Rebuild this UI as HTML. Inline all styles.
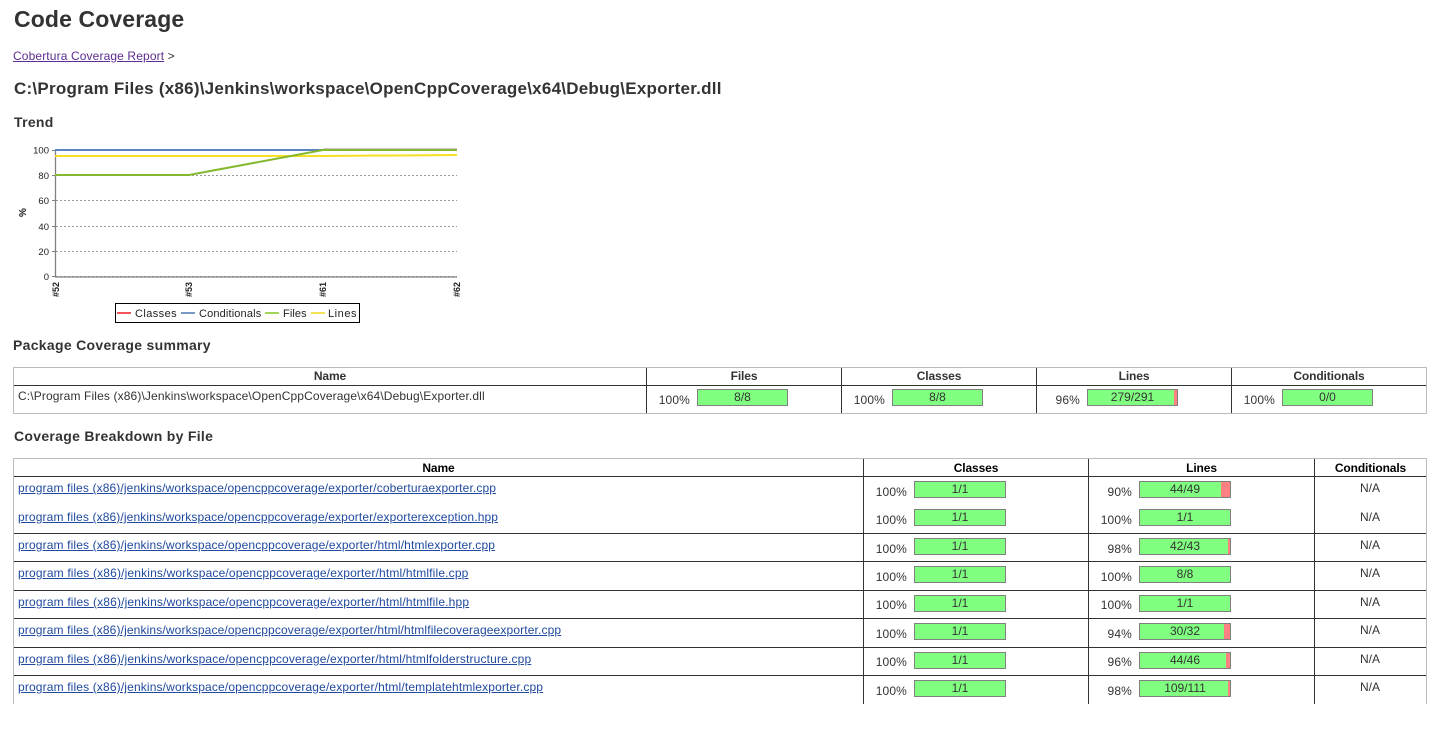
<!DOCTYPE html>
<html><head><meta charset="utf-8"><title>Code Coverage</title>
<style>
html,body{margin:0;padding:0;background:#fff;width:1436px;height:730px;overflow:hidden}
body{position:relative;font-family:"Liberation Sans",Arial,sans-serif;color:#333;font-size:12px}
.t{position:absolute;white-space:nowrap;line-height:14px;letter-spacing:.125px}
.hd{position:absolute;white-space:nowrap;font-size:14px;line-height:16px;font-weight:bold;letter-spacing:.3px}
.h{position:absolute;background:#333;height:1px}
.v{position:absolute;background:#333;width:1px}
.g{position:absolute;background:#bbb}
a{color:#204a9f;text-decoration:underline}
.th{position:absolute;white-space:nowrap;line-height:14px;font-weight:bold;text-align:center;letter-spacing:-.12px}
.b{position:absolute;width:90px;height:15px;border:1px solid #808080;background:#80ff80;text-align:center;line-height:14px;color:#333}
.s{width:89px}
.b i{position:absolute;right:0;top:0;height:15px;background:#ff8080}
.b span{position:relative}
.p{position:absolute;white-space:nowrap;text-align:right;line-height:14px;width:40px;letter-spacing:.15px}
.n{position:absolute;left:1314px;width:112px;text-align:center;line-height:14px}
</style></head><body>
<div class="t" style="left:14px;top:7px;font-size:23px;line-height:25px;font-weight:bold;letter-spacing:.12px">Code Coverage</div>
<div class="t" style="left:13px;top:49px"><a href="#" style="color:#5c2d91">Cobertura Coverage Report</a> &gt;</div>
<div class="t" style="left:14px;top:80px;font-size:17px;line-height:18px;font-weight:bold;letter-spacing:.24px">C:\Program Files (x86)\Jenkins\workspace\OpenCppCoverage\x64\Debug\Exporter.dll</div>
<div class="hd" style="left:14px;top:114px">Trend</div>

<svg style="position:absolute;left:0;top:130px" width="480" height="200" viewBox="0 130 480 200">
<g stroke="#999" stroke-width="1" stroke-dasharray="2 2" fill="none">
<path d="M56 175.500H457M56 200.500H457M56 226.500H457M56 251.500H457M56 276.500H457"/>
</g>
<path d="M55.500 150V277H457" stroke="#808080" stroke-width="1.300" fill="none"/>
<path d="M52 150.500H55M52 175.500H55M52 200.500H55M52 226.500H55M52 251.500H55M52 276.500H55" stroke="#808080" fill="none"/>
<path d="M323 149.500H457" stroke="#d8c8c8" stroke-width="3" fill="none"/>
<path d="M55 150H323" stroke="#5b83bd" stroke-width="2" fill="none"/>
<path d="M55 156H323L457 155" stroke="#f5e025" stroke-width="2" fill="none"/>
<path d="M55 175H189L323 150H457" stroke="#84b82e" stroke-width="2" fill="none"/>
<g font-family="Liberation Sans,Arial,sans-serif" font-size="9.500" fill="#222" text-anchor="end">
<text x="49" y="153.500">100</text><text x="49" y="179">80</text><text x="49" y="204">60</text><text x="49" y="230">40</text><text x="49" y="255">20</text><text x="49" y="280">0</text>
</g>
<text transform="translate(26,217) rotate(-90)" font-family="Liberation Sans,Arial,sans-serif" font-size="10" font-weight="bold" fill="#222">%</text>
<g font-family="Liberation Sans,Arial,sans-serif" font-size="9" font-weight="bold" fill="#222" text-anchor="end">
<text transform="translate(59,282) rotate(-90)">#52</text>
<text transform="translate(192,282) rotate(-90)">#53</text>
<text transform="translate(326,282) rotate(-90)">#61</text>
<text transform="translate(460,282) rotate(-90)">#62</text>
</g>
<rect x="115.500" y="303.500" width="244" height="19" fill="#fff" stroke="#000"/>
<path d="M117 313H131" stroke="#f01c24" stroke-width="1.500"/>
<path d="M181 313H195" stroke="#4a76b8" stroke-width="1.500"/>
<path d="M265 313H279" stroke="#84c81e" stroke-width="1.500"/>
<path d="M311 313H325" stroke="#f0d81e" stroke-width="1.500"/>
<g font-family="Liberation Sans,Arial,sans-serif" font-size="11" fill="#222">
<text x="135" y="317" letter-spacing=".42">Classes</text><text x="199" y="317" letter-spacing=".15">Conditionals</text><text x="283" y="317" letter-spacing=".1">Files</text><text x="328" y="317" letter-spacing=".55">Lines</text>
</g>
</svg>

<div class="hd" style="left:13px;top:337px">Package Coverage summary</div>

<div class="g" style="left:13px;top:367px;width:1414px;height:1px"></div>
<div class="g" style="left:13px;top:413px;width:1414px;height:1px"></div>
<div class="g" style="left:13px;top:367px;width:1px;height:47px"></div>
<div class="g" style="left:1426px;top:367px;width:1px;height:47px"></div>
<div class="h" style="left:14px;top:385px;width:1412px"></div>
<div class="v" style="left:646px;top:368px;height:45px"></div>
<div class="v" style="left:841px;top:368px;height:45px"></div>
<div class="v" style="left:1036px;top:368px;height:45px"></div>
<div class="v" style="left:1231px;top:368px;height:45px"></div>
<div class="th" style="left:14px;width:632px;top:369px">Name</div>
<div class="th" style="left:647px;width:194px;top:369px">Files</div>
<div class="th" style="left:842px;width:194px;top:369px">Classes</div>
<div class="th" style="left:1037px;width:194px;top:369px">Lines</div>
<div class="th" style="left:1232px;width:194px;top:369px">Conditionals</div>
<div class="t" style="left:18px;top:389px">C:\Program Files (x86)\Jenkins\workspace\OpenCppCoverage\x64\Debug\Exporter.dll</div>
<div class="p" style="left:650px;top:393px">100%</div><div class="b s" style="left:697px;top:389px">8/8</div>
<div class="p" style="left:845px;top:393px">100%</div><div class="b s" style="left:892px;top:389px">8/8</div>
<div class="p" style="left:1040px;top:393px">96%</div><div class="b s" style="left:1087px;top:389px"><i style="width:3px"></i><span>279/291</span></div>
<div class="p" style="left:1235px;top:393px">100%</div><div class="b s" style="left:1282px;top:389px">0/0</div>

<div class="hd" style="left:14px;top:428px">Coverage Breakdown by File</div>

<div class="g" style="left:13px;top:458px;width:1414px;height:1px"></div>
<div class="g" style="left:13px;top:458px;width:1px;height:246px"></div>
<div class="g" style="left:1426px;top:458px;width:1px;height:246px"></div>
<div class="h" style="left:14px;top:476px;width:1412px"></div>
<div class="h" style="left:14px;top:533px;width:1412px"></div>
<div class="h" style="left:14px;top:561px;width:1412px"></div>
<div class="h" style="left:14px;top:590px;width:1412px"></div>
<div class="h" style="left:14px;top:618px;width:1412px"></div>
<div class="h" style="left:14px;top:647px;width:1412px"></div>
<div class="h" style="left:14px;top:675px;width:1412px"></div>
<div class="v" style="left:863px;top:459px;height:245px"></div>
<div class="v" style="left:1088px;top:459px;height:245px"></div>
<div class="v" style="left:1314px;top:459px;height:245px"></div>
<div class="th" style="left:14px;width:849px;top:461px;color:#000">Name</div>
<div class="th" style="left:864px;width:224px;top:461px;color:#000">Classes</div>
<div class="th" style="left:1089px;width:225px;top:461px;color:#000">Lines</div>
<div class="th" style="left:1315px;width:111px;top:461px;color:#000">Conditionals</div>

<div class="t" style="left:18px;top:481px"><a href="#">program files (x86)/jenkins/workspace/opencppcoverage/exporter/coberturaexporter.cpp</a></div>
<div class="p" style="left:867px;top:485px">100%</div><div class="b" style="left:914px;top:481px">1/1</div>
<div class="p" style="left:1092px;top:485px">90%</div><div class="b" style="left:1139px;top:481px"><i style="width:9px"></i><span>44/49</span></div>
<div class="n" style="top:481px">N/A</div>

<div class="t" style="left:18px;top:510px"><a href="#">program files (x86)/jenkins/workspace/opencppcoverage/exporter/exporterexception.hpp</a></div>
<div class="p" style="left:867px;top:513px">100%</div><div class="b" style="left:914px;top:509px">1/1</div>
<div class="p" style="left:1092px;top:513px">100%</div><div class="b" style="left:1139px;top:509px">1/1</div>
<div class="n" style="top:510px">N/A</div>

<div class="t" style="left:18px;top:538px;letter-spacing:.137px"><a href="#">program files (x86)/jenkins/workspace/opencppcoverage/exporter/html/htmlexporter.cpp</a></div>
<div class="p" style="left:867px;top:542px">100%</div><div class="b" style="left:914px;top:538px">1/1</div>
<div class="p" style="left:1092px;top:542px">98%</div><div class="b" style="left:1139px;top:538px"><i style="width:2px"></i><span>42/43</span></div>
<div class="n" style="top:538px">N/A</div>

<div class="t" style="left:18px;top:566px;letter-spacing:.162px"><a href="#">program files (x86)/jenkins/workspace/opencppcoverage/exporter/html/htmlfile.cpp</a></div>
<div class="p" style="left:867px;top:570px">100%</div><div class="b" style="left:914px;top:566px">1/1</div>
<div class="p" style="left:1092px;top:570px">100%</div><div class="b" style="left:1139px;top:566px">8/8</div>
<div class="n" style="top:566px">N/A</div>

<div class="t" style="left:18px;top:595px;letter-spacing:.162px"><a href="#">program files (x86)/jenkins/workspace/opencppcoverage/exporter/html/htmlfile.hpp</a></div>
<div class="p" style="left:867px;top:598px">100%</div><div class="b" style="left:914px;top:595px">1/1</div>
<div class="p" style="left:1092px;top:598px">100%</div><div class="b" style="left:1139px;top:595px">1/1</div>
<div class="n" style="top:595px">N/A</div>

<div class="t" style="left:18px;top:623px;letter-spacing:.135px"><a href="#">program files (x86)/jenkins/workspace/opencppcoverage/exporter/html/htmlfilecoverageexporter.cpp</a></div>
<div class="p" style="left:867px;top:627px">100%</div><div class="b" style="left:914px;top:623px">1/1</div>
<div class="p" style="left:1092px;top:627px">94%</div><div class="b" style="left:1139px;top:623px"><i style="width:6px"></i><span>30/32</span></div>
<div class="n" style="top:623px">N/A</div>

<div class="t" style="left:18px;top:652px;letter-spacing:.158px"><a href="#">program files (x86)/jenkins/workspace/opencppcoverage/exporter/html/htmlfolderstructure.cpp</a></div>
<div class="p" style="left:867px;top:655px">100%</div><div class="b" style="left:914px;top:652px">1/1</div>
<div class="p" style="left:1092px;top:655px">96%</div><div class="b" style="left:1139px;top:652px"><i style="width:4px"></i><span>44/46</span></div>
<div class="n" style="top:652px">N/A</div>

<div class="t" style="left:18px;top:680px;letter-spacing:.147px"><a href="#">program files (x86)/jenkins/workspace/opencppcoverage/exporter/html/templatehtmlexporter.cpp</a></div>
<div class="p" style="left:867px;top:684px">100%</div><div class="b" style="left:914px;top:680px">1/1</div>
<div class="p" style="left:1092px;top:684px">98%</div><div class="b" style="left:1139px;top:680px"><i style="width:2px"></i><span>109/111</span></div>
<div class="n" style="top:680px">N/A</div>
</body></html>
